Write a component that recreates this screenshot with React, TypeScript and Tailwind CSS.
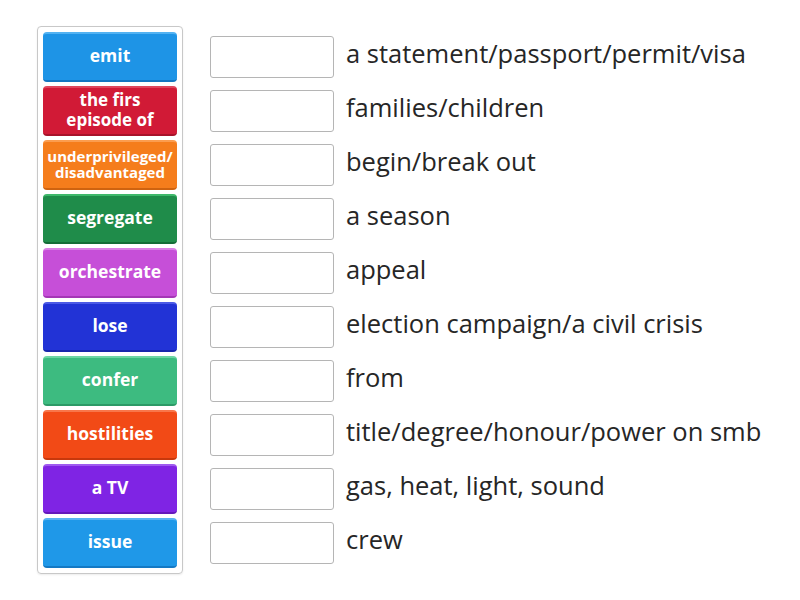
const cards = [
  { label: "emit", bg: "bg-[#1e94e6]", top: "border-t-[#52b2f2]", bottom: "border-b-[#1276c2]", size: "text-[17.5px]" },
  { label: "the firs episode of", bg: "bg-[#d11a36]", top: "border-t-[#e0455c]", bottom: "border-b-[#a8122a]", size: "text-[17px] leading-[20px]" },
  { label: "underprivileged/ disadvantaged", bg: "bg-[#f57d1c]", top: "border-t-[#fb9d50]", bottom: "border-b-[#cf6310]", size: "text-[15px] leading-[16px]" },
  { label: "segregate", bg: "bg-[#1f8c4a]", top: "border-t-[#3fb86a]", bottom: "border-b-[#146c37]", size: "text-[17.5px]" },
  { label: "orchestrate", bg: "bg-[#c64fd8]", top: "border-t-[#da7fe7]", bottom: "border-b-[#a436b6]", size: "text-[17.5px]" },
  { label: "lose", bg: "bg-[#2233d6]", top: "border-t-[#4b5ae6]", bottom: "border-b-[#1826ac]", size: "text-[17.5px]" },
  { label: "confer", bg: "bg-[#3dbb80]", top: "border-t-[#6dd6a3]", bottom: "border-b-[#2c9a66]", size: "text-[17.5px]" },
  { label: "hostilities", bg: "bg-[#f24a16]", top: "border-t-[#f8764a]", bottom: "border-b-[#c8380c]", size: "text-[17.5px]" },
  { label: "a TV", bg: "bg-[#7f24e4]", top: "border-t-[#a05aef]", bottom: "border-b-[#6418bb]", size: "text-[17.5px]" },
  { label: "issue", bg: "bg-[#1f98e8]", top: "border-t-[#56b4f2]", bottom: "border-b-[#1479c4]", size: "text-[17.5px]" },
];

const prompts = [
  "a statement/passport/permit/visa",
  "families/children",
  "begin/break out",
  "a season",
  "appeal",
  "election campaign/a civil crisis",
  "from",
  "title/degree/honour/power on smb",
  "gas, heat, light, sound",
  "crew",
];

export default function App() {
  return (
    <div
      className="w-[800px] h-[600px] bg-white relative"
      style={{ fontFamily: '"Open Sans", sans-serif' }}
    >
      <div className="flex pt-[26px] pl-[37px]">
        <div className="w-[146px] border border-[#c8c8c8] rounded-[4px] px-[5px] pt-[5px] pb-[5px] flex flex-col gap-[4px] shadow-[0_1px_2px_rgba(0,0,0,0.08)]">
          {cards.map((c, i) => (
            <div
              key={i}
              className={`h-[50px] rounded-[4px] border-t-2 border-b-2 ${c.bg} ${c.top} ${c.bottom} flex items-center justify-center text-center text-white font-bold ${c.size} px-[2px]`}
            >
              <span className="-mt-[3px]">{c.label}</span>
            </div>
          ))}
        </div>
        <div className="flex flex-col pt-[6px] pl-[27px] gap-[4px]">
          {prompts.map((p, i) => (
            <div key={i} className="h-[50px] flex items-center gap-[12px]">
              <div className="w-[124px] h-[42px] border border-[#b5b5b5] rounded-[3px] bg-white shrink-0" />
              <span className="text-[25.5px] text-[#262626] whitespace-nowrap -mt-[8px]">{p}</span>
            </div>
          ))}
        </div>
      </div>
    </div>
  );
}
